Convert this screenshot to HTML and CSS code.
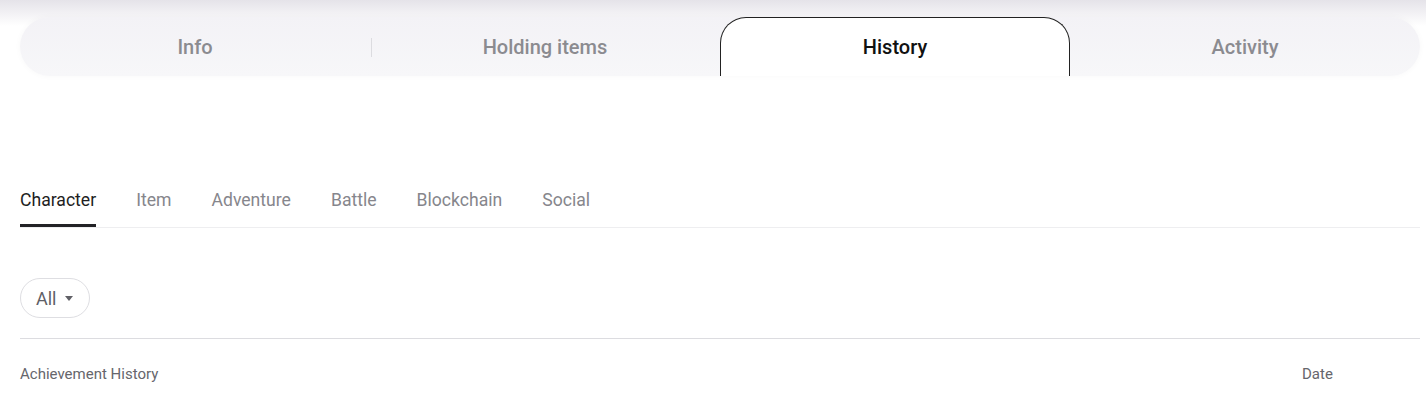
FILE: index.html
```html
<!DOCTYPE html>
<html>
<head>
    <meta charset="utf-8">
    <title>History</title>
    <link rel="stylesheet" href="styles.css">
</head>
<body>
<div class="page">
    <div class="tabbar">
        <div class="tab">Info</div>
        <div class="tab sep">Holding items</div>
        <div class="tab active">History</div>
        <div class="tab">Activity</div>
    </div>

    <ul class="subnav">
        <li class="on">Character</li>
        <li>Item</li>
        <li>Adventure</li>
        <li>Battle</li>
        <li>Blockchain</li>
        <li>Social</li>
    </ul>

    <div class="filter">
        <span class="select">All <i class="caret"></i></span>
    </div>

    <div class="thead">
        <span>Achievement History</span>
        <span>Date</span>
    </div>
</div>
</body>
</html>
```

FILE: styles.css
```css
body {
    margin: 0;
    background: #fff;
    font-family: Roboto, "Liberation Sans", sans-serif;
}

.page {
    padding: 17px 6px 0 20px;
    background: linear-gradient(#e5e3e9 0, #f3f2f5 14px, #fff 26px, #fff 100%);
    background-repeat: no-repeat;
    background-size: 100% 40px;
}

.tabbar {
    display: grid;
    grid-template-columns: repeat(4, 1fr);
    height: 59px;
    border-radius: 30px;
    background: linear-gradient(#f3f2f6, #f7f7f9);
    box-shadow: 0 0 6px rgba(0, 0, 0, 0.03);
}

.tab {
    display: flex;
    align-items: center;
    justify-content: center;
    font-size: 20px;
    font-weight: 500;
    color: #8b8b90;
    position: relative;
}

.tab.sep::before {
    content: "";
    position: absolute;
    left: 1px;
    top: 21px;
    height: 19px;
    border-left: 1px solid #dcdce0;
}

.tab.active {
    background: #fff;
    color: #111;
    border: 1px solid #222;
    border-bottom: 0;
    border-radius: 26px 26px 0 0;
    padding-bottom: 1px;
}

.subnav {
    display: flex;
    gap: 40px;
    list-style: none;
    margin: 112px 0 0;
    padding: 0;
    border-bottom: 1px solid #eeeef0;
}

.subnav li {
    font-size: 17.6px;
    line-height: 24px;
    color: #86868c;
    padding-bottom: 12px;
    border-bottom: 3px solid transparent;
}

.subnav li.on {
    color: #1e1e22;
    border-bottom-color: #222226;
}

.filter {
    padding: 50px 0 20px;
}

.select {
    display: inline-flex;
    align-items: center;
    gap: 8px;
    height: 38px;
    padding: 0 16px 0 15px;
    border: 1px solid #dedee2;
    border-radius: 20px;
    font-size: 18px;
    color: #606066;
}

.caret {
    width: 0;
    height: 0;
    border-left: 4.5px solid transparent;
    border-right: 4.5px solid transparent;
    border-top: 5px solid #606066;
    margin-top: 1px;
}

.thead {
    display: grid;
    grid-template-columns: 1fr 118px;
    border-top: 1px solid #dcdce0;
    padding-top: 26px;
    font-size: 15px;
    color: #66666c;
}
```
